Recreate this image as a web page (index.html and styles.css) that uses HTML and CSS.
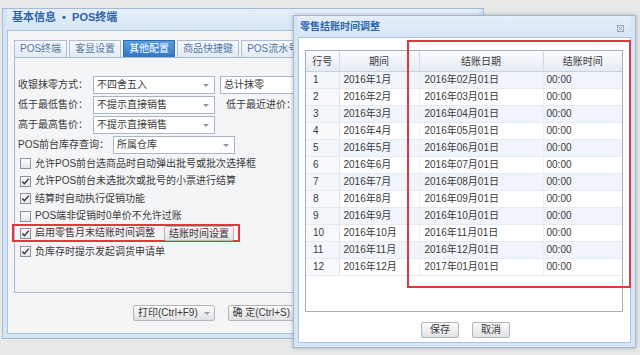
FILE: index.html
```html
<!DOCTYPE html>
<html lang="zh-CN">
<head>
  <meta charset="UTF-8" />
  <meta name="viewport" content="width=device-width, initial-scale=1.0" />
  <title>POS终端</title>
  <link rel="stylesheet" href="styles.css">
</head>
<body>
  <div class="desk">

    <div class="win main-win">
      <div class="win-title">基本信息 &nbsp;•&nbsp; POS终端</div>
      <div class="win-body">
        <div class="tabs">
          <span class="tab">POS终端</span>
          <span class="tab">客显设置</span>
          <span class="tab active">其他配置</span>
          <span class="tab">商品快捷键</span>
          <span class="tab">POS流水号设置</span>
        </div>

        <div class="panel">
          <div class="field">
            <span class="lbl">收银抹零方式：</span>
            <span class="select"><span>不四舍五入</span><i class="arrow"></i></span>
            <span class="select second"><span>总计抹零</span><i class="arrow"></i></span>
          </div>
          <div class="field">
            <span class="lbl">低于最低售价：</span>
            <span class="select"><span>不提示直接销售</span><i class="arrow"></i></span>
            <span class="lbl after">低于最近进价：</span>
          </div>
          <div class="field">
            <span class="lbl">高于最高售价：</span>
            <span class="select"><span>不提示直接销售</span><i class="arrow"></i></span>
          </div>
          <div class="field">
            <span class="lbl wide">POS前台库存查询：</span>
            <span class="select"><span>所属仓库</span><i class="arrow"></i></span>
          </div>

          <div class="check"><span class="box"></span>允许POS前台选商品时自动弹出批号或批次选择框</div>
          <div class="check"><span class="box on"></span>允许POS前台未选批次或批号的小票进行结算</div>
          <div class="check"><span class="box on"></span>结算时自动执行促销功能</div>
          <div class="check"><span class="box"></span>POS端非促销时0单价不允许过账</div>
          <div class="check marked"><span class="box on"></span>启用零售月末结账时间调整<button class="btn small">结账时间设置</button></div>
          <div class="check"><span class="box on"></span>负库存时提示发起调货申请单</div>
        </div>

        <div class="win-foot">
          <button class="btn">打印(Ctrl+F9) <i class="caret"></i></button>
          <button class="btn">确 定(Ctrl+S)</button>
        </div>
      </div>
    </div>

    <div class="win dialog">
      <div class="win-title dlg-title">
        <span>零售结账时间调整</span>
        <svg class="close" width="7" height="7" viewBox="0 0 7 7"><rect x="0.5" y="0.5" width="6" height="6" fill="none" stroke="#a3a9b0"/><path d="M1.5 1.5 L5.5 5.5 M5.5 1.5 L1.5 5.5" stroke="#a3a9b0"/></svg>
      </div>
      <div class="dlg-body">
        <div class="grid">
          <table>
            <thead>
              <tr><th class="c1">行号</th><th class="c2">期间</th><th class="c3">结账日期</th><th class="c4">结账时间</th></tr>
            </thead>
            <tbody>
              <tr class="sel"><td>1</td><td>2016年1月</td><td>2016年02月01日</td><td>00:00</td></tr>
              <tr><td>2</td><td>2016年2月</td><td>2016年03月01日</td><td>00:00</td></tr>
              <tr><td>3</td><td>2016年3月</td><td>2016年04月01日</td><td>00:00</td></tr>
              <tr><td>4</td><td>2016年4月</td><td>2016年05月01日</td><td>00:00</td></tr>
              <tr><td>5</td><td>2016年5月</td><td>2016年06月01日</td><td>00:00</td></tr>
              <tr><td>6</td><td>2016年6月</td><td>2016年07月01日</td><td>00:00</td></tr>
              <tr><td>7</td><td>2016年7月</td><td>2016年08月01日</td><td>00:00</td></tr>
              <tr><td>8</td><td>2016年8月</td><td>2016年09月01日</td><td>00:00</td></tr>
              <tr><td>9</td><td>2016年9月</td><td>2016年10月01日</td><td>00:00</td></tr>
              <tr><td>10</td><td>2016年10月</td><td>2016年11月01日</td><td>00:00</td></tr>
              <tr><td>11</td><td>2016年11月</td><td>2016年12月01日</td><td>00:00</td></tr>
              <tr><td>12</td><td>2016年12月</td><td>2017年01月01日</td><td>00:00</td></tr>
            </tbody>
          </table>
        </div>
        <div class="dlg-foot">
          <button class="btn">保存</button>
          <button class="btn">取消</button>
        </div>
      </div>
      <div class="annot"></div>
    </div>

  </div>
</body>
</html>
```

FILE: styles.css
```css
* {
  box-sizing: border-box;
  margin: 0;
  padding: 0;
}

body {
  width: 640px;
  height: 355px;
  overflow: hidden;
  background: #e8e8e8;
  font-family: "Liberation Sans", "Noto Sans CJK SC", sans-serif;
  font-size: 10px;
  color: #3a3a3a;
}

.desk {
  position: relative;
  width: 640px;
  height: 355px;
}

/* windows */
.win {
  position: absolute;
  display: flex;
  flex-direction: column;
  border: 1px solid #a3bad5;
  background: #d6e5f5;
  padding: 0 4px 4px;
}

.main-win {
  left: 2px;
  top: 8px;
  width: 482px;
  height: 331px;
}

.win-title {
  height: 21px;
  line-height: 17px;
  padding-left: 5px;
  font-size: 11px;
  font-weight: bold;
  color: #2f63a8;
  background: linear-gradient(#e6effa, #d6e5f5);
}

.win-body {
  flex: 1;
  display: flex;
  flex-direction: column;
  background: #f4f5f7;
  border: 1px solid #aac1dc;
  padding: 9px 6px 0;
}

/* tabs */
.tabs {
  display: flex;
  gap: 2px;
  height: 17px;
}

.tab {
  height: 17px;
  line-height: 15px;
  padding: 0 5px;
  border: 1px solid #aabed6;
  border-bottom: none;
  background: linear-gradient(#f7f9fc, #e2eaf4);
  color: #54789f;
  white-space: nowrap;
}

.tab.active {
  background: linear-gradient(#5c9de0, #2f77c5);
  border-color: #2f6db3;
  color: #fff;
}

.panel {
  height: 236px;
  border: 1px solid #abb9ca;
  padding: 17px 0 0 3px;
}

.field {
  display: flex;
  align-items: center;
  height: 20px;
  white-space: nowrap;
}

.lbl {
  width: 75px;
  line-height: 14px;
}

.lbl.wide {
  width: 95px;
}

.lbl.after {
  width: auto;
  margin-left: 11px;
}

.select {
  display: flex;
  align-items: center;
  justify-content: space-between;
  width: 122px;
  height: 18px;
  padding: 0 5px 0 3px;
  background: #fff;
  border: 1px solid #a9b6c4;
  line-height: 14px;
}

.select.second {
  margin-left: 5px;
  width: 140px;
}

.arrow {
  width: 0;
  height: 0;
  border-left: 3px solid transparent;
  border-right: 3px solid transparent;
  border-top: 3px solid #8d949c;
}

.check {
  display: flex;
  align-items: center;
  gap: 4px;
  height: 17.5px;
  padding-left: 2px;
  line-height: 14px;
  white-space: nowrap;
}

.box {
  width: 11px;
  height: 11px;
  border: 1px solid #8e9399;
  background: linear-gradient(#fdfdfd, #e4e6e9);
}

.box.on {
  background-image: url("data:image/svg+xml;utf8,<svg xmlns='http://www.w3.org/2000/svg' width='9' height='9' viewBox='0 0 9 9'><path d='M1.3 4.6 L3.4 6.8 L7.8 1.6' fill='none' stroke='%23333' stroke-width='1.4'/></svg>"), linear-gradient(#fdfdfd, #e4e6e9);
  background-repeat: no-repeat;
}

.check.marked {
  width: 228px;
  height: 18px;
  margin: -1px 0 1px -6px;
  padding-left: 6px;
  border: 2px solid #e1373d;
}

/* buttons */
.btn {
  height: 16px;
  padding: 0 6px;
  border: 1px solid #b4b6b9;
  border-radius: 2px;
  background: linear-gradient(#fbfbfb, #e0e1e3);
  font-family: inherit;
  font-size: 10px;
  line-height: 14px;
  color: #3a3a3a;
  white-space: nowrap;
}

.btn.small {
  height: 15px;
  margin-left: 5px;
  padding: 0 4px;
}

.caret {
  display: inline-block;
  vertical-align: middle;
  margin-left: 3px;
  width: 0;
  height: 0;
  border-left: 3px solid transparent;
  border-right: 3px solid transparent;
  border-top: 3px solid #97a0aa;
}

.win-foot {
  display: flex;
  gap: 13px;
  padding: 12px 0 0 119px;
}

.win-foot .btn {
  padding: 0 4px;
}

/* dialog */
.dialog {
  left: 293px;
  top: 15px;
  width: 343px;
  height: 333px;
  box-shadow: 0 0 4px rgba(0, 0, 0, 0.25);
}

.dlg-title {
  display: flex;
  align-items: center;
  justify-content: space-between;
  padding: 0 7px 0 2px;
  font-size: 10px;
  line-height: 19px;
  color: #2d66b0;
}

.close {
  margin-top: 3px;
}

.dlg-body {
  flex: 1;
  display: flex;
  flex-direction: column;
  background: #fff;
  border: 1px solid #abc4e0;
  padding: 12px 0 0 6px;
}

.grid {
  width: 318px;
  height: 262px;
  border: 1px solid #a6aeb7;
  background: #fff;
}

.grid table {
  width: 316px;
  table-layout: fixed;
  border-collapse: collapse;
}

.grid th {
  height: 20px;
  font-weight: normal;
  text-align: center;
  background: linear-gradient(#fafcfe, #e4ebf4);
  border-right: 1px solid #d0d9e4;
  border-bottom: 1px solid #c7d2df;
}

.grid th:last-child {
  border-right: none;
}

.c1 { width: 33px; }
.c2 { width: 80px; }
.c3 { width: 124px; }
.c4 { width: 79px; }

.grid td {
  height: 17px;
  line-height: 14px;
  padding: 0 0 0 4px;
  border-bottom: 1px solid #e6ebf1;
  white-space: nowrap;
}

.grid td:first-child {
  padding-left: 7px;
  background: #f8f9fb;
  border-right: 1px solid #dfe4ea;
}

.grid td:nth-child(3) {
  padding-left: 5px;
  border-left: 1px solid #edf1f5;
}

.grid td:nth-child(4) {
  padding-left: 3px;
  border-left: 1px solid #edf1f5;
}

.grid tbody tr:nth-child(odd) td {
  background: #f0f5fb;
}

.grid tbody tr:nth-child(odd) td:first-child {
  background: #f3f6fa;
}

.grid tr.sel td {
  background: #c6dbf2;
}

.grid tr.sel td:first-child {
  background: #e9eef4;
}

.dlg-foot {
  display: flex;
  justify-content: center;
  gap: 13px;
  margin-top: 10px;
  padding-right: 4px;
}

.dlg-foot .btn {
  padding: 0 8px;
}

/* red highlight drawn over the dialog */
.annot {
  position: absolute;
  left: 113px;
  top: 24px;
  width: 224px;
  height: 248px;
  border: 2px solid #e1373d;
}
```
